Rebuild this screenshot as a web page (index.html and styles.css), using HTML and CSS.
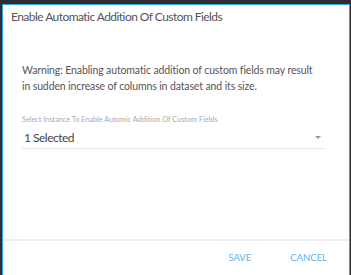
FILE: index.html
```html
<!DOCTYPE html>
<html lang="en">
<head>
  <meta charset="UTF-8" />
  <title>Enable Automatic Addition Of Custom Fields</title>
  <link rel="stylesheet" href="styles.css">
</head>
<body>
  <div class="dialog">
    <h2 class="dialog-title">Enable Automatic Addition Of Custom Fields</h2>

    <div class="dialog-body">
      <p class="warning">Warning: Enabling automatic addition of custom fields may result in sudden increase of columns in dataset and its size.</p>

      <div class="field">
        <label class="field-label">Select Instance To Enable Automic Addition Of Custom Fields</label>
        <div class="select">
          <span>1 Selected</span>
          <span class="caret"></span>
        </div>
      </div>
    </div>

    <div class="dialog-actions">
      <button type="button">SAVE</button>
      <button type="button">CANCEL</button>
    </div>
  </div>
</body>
</html>
```

FILE: styles.css
```css
html, body {
  height: 100%;
}

body {
  margin: 0;
  padding: 4px 0 0 2px;
  box-sizing: border-box;
  background: #2e2e2e;
  font-family: Lato, "Open Sans", sans-serif;
  color: #555;
}

.dialog {
  width: 348px;
  height: 100%;
  box-sizing: border-box;
  border: 1px solid #2ea6e6;
  border-bottom: none;
  background: #fff;
  display: flex;
  flex-direction: column;
}

.dialog-title {
  margin: 0;
  padding: 4px 0 0 8px;
  font-size: 12px;
  letter-spacing: -0.55px;
  font-weight: normal;
  color: #555;
}

.dialog-body {
  flex: 1;
  padding: 0 24px 0 19px;
}

.warning {
  margin: 38px 8px 0 0;
  font-size: 10.5px;
  letter-spacing: -0.12px;
  line-height: 16px;
  color: #555;
}

.field {
  margin-top: 21px;
}

.field-label {
  display: block;
  font-size: 7.3px;
  color: #aaa;
}

.select {
  display: flex;
  justify-content: space-between;
  align-items: center;
  padding: 6px 0 3px 2px;
  border-bottom: 1px solid #e6e6e6;
  font-size: 12px;
  letter-spacing: -0.5px;
  color: #444;
}

.caret {
  width: 0;
  height: 0;
  margin-right: 4px;
  border-left: 3px solid transparent;
  border-right: 3px solid transparent;
  border-top: 3px solid #999;
}

.dialog-actions {
  display: flex;
  justify-content: flex-end;
  gap: 39px;
  padding: 11px 22px 12px 0;
  border-top: 2px solid #eee;
}

.dialog-actions button {
  background: none;
  border: none;
  padding: 0;
  font-family: inherit;
  font-size: 9.5px;
  color: #5ab3ea;
  cursor: pointer;
}
```
